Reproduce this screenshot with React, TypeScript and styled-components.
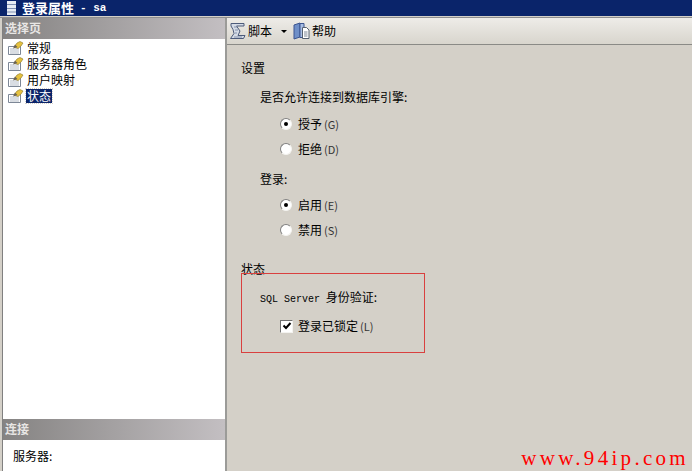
import React from "react";
import styled, { createGlobalStyle } from "styled-components";

const GlobalStyle = createGlobalStyle`
  html, body {
    margin: 0;
    padding: 0;
    background: #d4d0c8;
  }
`;

const Window = styled.div`
  width: 692px;
  height: 471px;
  overflow: hidden;
  display: flex;
  flex-direction: column;
  background: #d4d0c8;
  color: #000;
  font: 12px/16px "Noto Sans CJK SC", "Liberation Sans", sans-serif;
`;

const TitleBar = styled.div`
  height: 16px;
  flex: none;
  display: flex;
  align-items: center;
  gap: 6px;
  padding-left: 7px;
  background: #0a246a;
  border-bottom: 1px solid #d4d0c8;
  color: #fff;
  font-weight: 700;
  font-size: 13px;
  line-height: 14px;
`;

const TitleSuffix = styled.span`
  font: 700 11px/14px "Liberation Mono", monospace;
  white-space: pre;
`;

const Body = styled.div`
  flex: 1;
  display: flex;
  min-height: 0;
  border-top: 1px solid #8f8f8f;
`;

const Sidebar = styled.div`
  width: 222px;
  margin-left: 2px;
  flex: none;
  display: flex;
  flex-direction: column;
  background: #fff;
  border-left: 1px solid #808080;
`;

const SideHeader = styled.div`
  height: 21px;
  flex: none;
  display: flex;
  align-items: center;
  padding: 0 0 2px 2px;
  box-sizing: border-box;
  background: linear-gradient(90deg, #858382, #c3bfc2);
  color: #e8e6e4;
  font-weight: 700;
  font-size: 12px;
`;

const PageList = styled.ul`
  flex: 1;
  margin: 0;
  padding: 1px 0 0 3px;
  list-style: none;
`;

const PageItem = styled.li`
  height: 16px;
  display: flex;
  align-items: center;
  gap: 2px;
`;

const PageLabel = styled.span<{ $selected?: boolean }>`
  padding: 0 1px;
  line-height: 14px;
  background: ${({ $selected }) => ($selected ? "#0a246a" : "transparent")};
  color: ${({ $selected }) => ($selected ? "#fff" : "#000")};
  outline: ${({ $selected }) => ($selected ? "1px dotted #d4d0c8" : "none")};
`;

const ConnectionBody = styled.div`
  height: 31px;
  flex: none;
  box-sizing: border-box;
  padding: 8px 0 0 10px;
`;

const Content = styled.div`
  flex: 1;
  position: relative;
  display: flex;
  flex-direction: column;
  border-left: 2px solid #9b9b98;
`;

const Toolbar = styled.div`
  height: 26px;
  flex: none;
  display: flex;
  align-items: center;
  padding-left: 2px;
  gap: 2px;
  background: linear-gradient(180deg, #eeece8, #d8d5cd);
  border-bottom: 1px solid #8a8a86;
`;

const ToolLabel = styled.span`
  margin-right: 5px;
`;

const Caret = styled.span`
  width: 0;
  height: 0;
  margin: 0 4px 0 2px;
  border-left: 3px solid transparent;
  border-right: 3px solid transparent;
  border-top: 3px solid #000;
`;

const Form = styled.div`
  flex: 1;
  display: flex;
  flex-direction: column;
  padding: 15px 0 0 14px;
`;

const Line = styled.div<{ $indent?: number; $top: number }>`
  height: 16px;
  display: flex;
  align-items: center;
  gap: 6px;
  margin-top: ${({ $top }) => $top}px;
  padding-left: ${({ $indent }) => $indent ?? 0}px;
  white-space: pre;
`;

const Mono = styled.span`
  font: 10px "Liberation Mono", monospace;
  margin-right: 3px;
`;

const Radio = styled.span<{ $checked?: boolean }>`
  width: 12px;
  height: 12px;
  flex: none;
  box-sizing: border-box;
  border-radius: 50%;
  display: flex;
  align-items: center;
  justify-content: center;
  background: #fff;
  border: 1px solid;
  border-color: #808080 #f4f3f0 #f4f3f0 #808080;

  &::after {
    content: "";
    width: 4px;
    height: 4px;
    border-radius: 50%;
    background: ${({ $checked }) => ($checked ? "#000" : "transparent")};
  }
`;

const CheckBox = styled.span`
  width: 13px;
  height: 13px;
  flex: none;
  box-sizing: border-box;
  display: flex;
  align-items: center;
  justify-content: center;
  background: #fff;
  border: 1px solid;
  border-color: #707070 #f4f3f0 #f4f3f0 #707070;
  margin-right: -1px;
`;

const Mnemonic = styled.span`
  font-size: 11px;
  margin-left: 2px;
  color: #333;
`;

const Annotation = styled.div`
  position: absolute;
  left: 14px;
  top: 255px;
  width: 182px;
  height: 78px;
  border: 1px solid #d9403f;
`;

const Watermark = styled.div`
  position: absolute;
  right: 3px;
  bottom: 1px;
  color: #f00;
  font: 21px/24px "Liberation Serif", serif;
  letter-spacing: 3.3px;
`;

function PageIcon() {
  return (
    <svg width="18" height="15" viewBox="0 0 18 15">
      <path d="M2.5 5.5h12v8h-12z" fill="#fff" stroke="#7d8796" />
      <path d="M4 8h9M4 10h9M4 12h9" stroke="#b3bbc6" />
      <path d="M8 6l3-4 3-1.500 3 1.500-2 3-3 2.500z" fill="#e6c240" stroke="#8a7420" strokeWidth="0.6" />
      <path d="M7 7.500l2-4 2.500 2.500z" fill="#6a6256" />
    </svg>
  );
}

function ScriptIcon() {
  return (
    <svg width="17" height="18" viewBox="0 0 17 18">
      <path d="M2 1.500h13v2.500H7.500l3.500 5-2 4.500h7l-1.500 3H1.500l3.500-5-1-4L2 4z" fill="#d5dbe6" stroke="#4d5b7a" />
      <path d="M5 5h3M6 8h3M6 11h2M5 15h8" stroke="#8593ad" />
    </svg>
  );
}

function HelpIcon() {
  return (
    <svg width="17" height="18" viewBox="0 0 17 18">
      <path d="M1 3l6-2v14l-6 2z" fill="#6f8fc8" stroke="#3c5590" />
      <path d="M7 1.500h4v14H7z" fill="#a9bfe4" stroke="#3c5590" />
      <path d="M9.500 5.500h4l2.500 2.500v8.500H9.500z" fill="#fff" stroke="#55606f" />
      <path d="M11 10h3.500M11 12h3.500M11 14h3.500" stroke="#7d8796" />
    </svg>
  );
}

function CheckMark() {
  return (
    <svg width="10" height="10" viewBox="0 0 10 10">
      <path d="M1.500 4.500l2.500 2.500 4.500-5" fill="none" stroke="#000" strokeWidth="2" />
    </svg>
  );
}

function DocIcon() {
  return (
    <svg width="9" height="14" viewBox="0 0 9 14">
      <path d="M0 0h9v14H0z" fill="#e6ebf2" />
      <path d="M0 3.500h9M0 7.500h9M0 11h9" stroke="#7f8fb0" />
    </svg>
  );
}

const pages = ["常规", "服务器角色", "用户映射", "状态"];

export default function App() {
  return (
    <Window>
      <GlobalStyle />
      <TitleBar>
        <DocIcon />
        <span>登录属性</span>
        <TitleSuffix>- sa</TitleSuffix>
      </TitleBar>
      <Body>
        <Sidebar>
          <SideHeader>选择页</SideHeader>
          <PageList>
            {pages.map((page) => (
              <PageItem key={page}>
                <PageIcon />
                <PageLabel $selected={page === "状态"}>{page}</PageLabel>
              </PageItem>
            ))}
          </PageList>
          <SideHeader>连接</SideHeader>
          <ConnectionBody>服务器:</ConnectionBody>
        </Sidebar>
        <Content>
          <Toolbar>
            <ScriptIcon />
            <ToolLabel>脚本</ToolLabel>
            <Caret />
            <HelpIcon />
            <ToolLabel>帮助</ToolLabel>
          </Toolbar>
          <Form>
            <Line $top={0}>设置</Line>
            <Line $top={13} $indent={19}>是否允许连接到数据库引擎:</Line>
            <Line $top={11} $indent={39}>
              <Radio $checked />
              <span>授予<Mnemonic>(G)</Mnemonic></span>
            </Line>
            <Line $top={9} $indent={39}>
              <Radio />
              <span>拒绝<Mnemonic>(D)</Mnemonic></span>
            </Line>
            <Line $top={14} $indent={19}>登录:</Line>
            <Line $top={10} $indent={39}>
              <Radio $checked />
              <span>启用<Mnemonic>(E)</Mnemonic></span>
            </Line>
            <Line $top={9} $indent={39}>
              <Radio />
              <span>禁用<Mnemonic>(S)</Mnemonic></span>
            </Line>
            <Line $top={23}>状态</Line>
            <Line $top={12} $indent={19}>
              <span><Mono>SQL Server</Mono> 身份验证:</span>
            </Line>
            <Line $top={13} $indent={39}>
              <CheckBox><CheckMark /></CheckBox>
              <span>登录已锁定<Mnemonic>(L)</Mnemonic></span>
            </Line>
          </Form>
          <Annotation />
          <Watermark>www.94ip.com</Watermark>
        </Content>
      </Body>
    </Window>
  );
}
